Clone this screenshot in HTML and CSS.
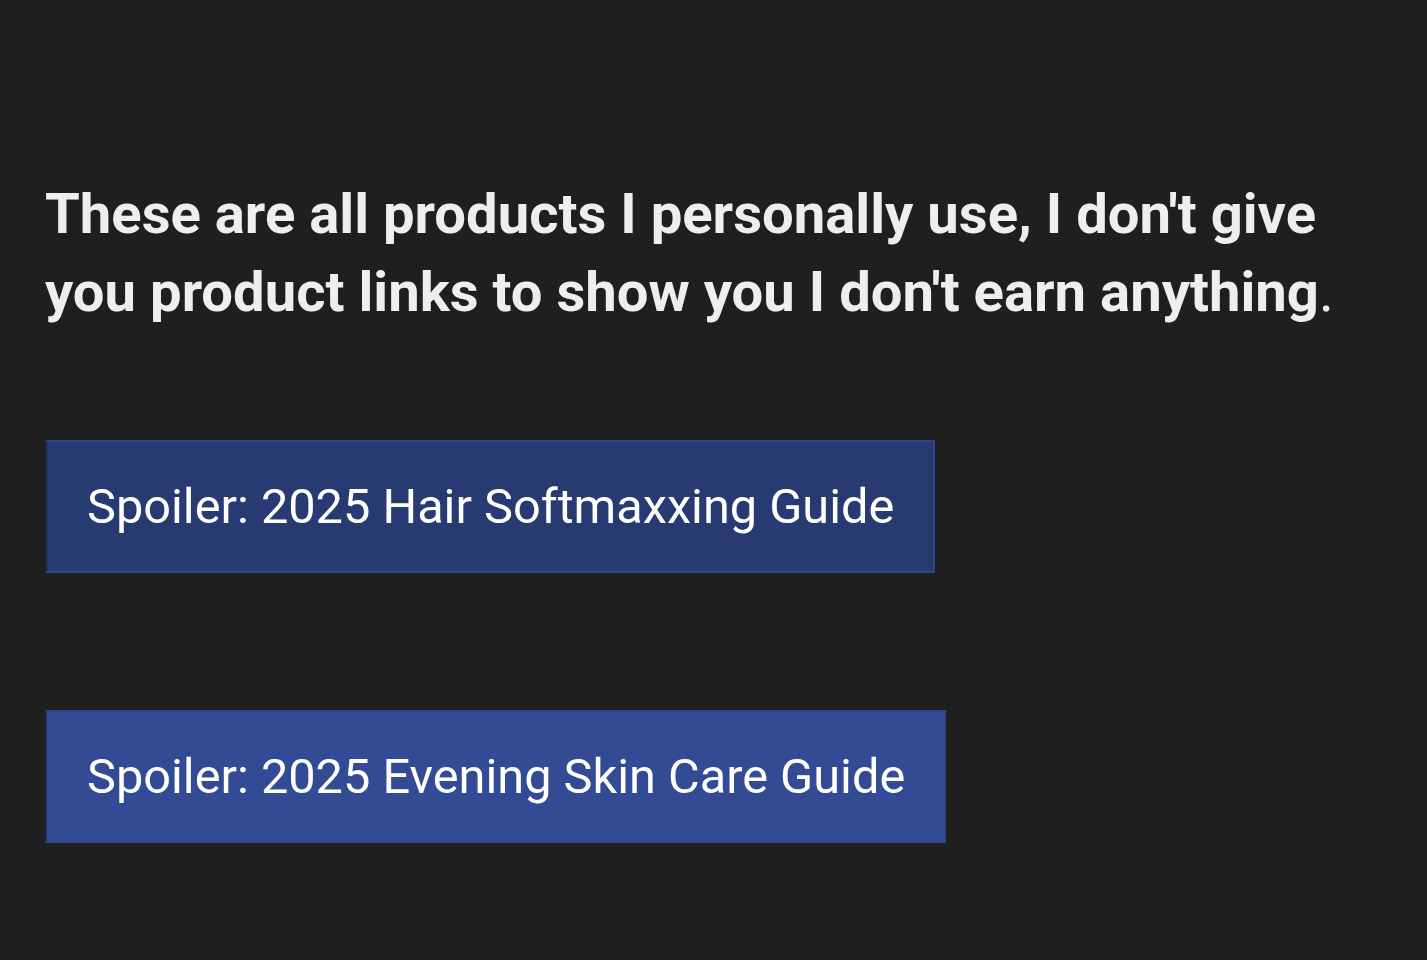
FILE: index.html
```html
<!DOCTYPE html>
<html lang="en">
<head>
    <meta charset="UTF-8">
    <meta name="viewport" content="width=device-width, initial-scale=1.0">
    <title>Products</title>
    <link rel="stylesheet" href="styles.css">
</head>
<body>
    <div class="page">
        <p class="intro"><strong>These are all products I personally use, I don't give you product links to show you I don't earn anything</strong>.</p>

        <!-- Spoiler buttons -->
        <div class="spoilers">
            <button class="spoiler">Spoiler: 2025 Hair Softmaxxing Guide</button>
            <button class="spoiler active">Spoiler: 2025 Evening Skin Care Guide</button>
        </div>
    </div>
</body>
</html>
```

FILE: styles.css
```css
body {
    background-color: #1f1f1f;
    color: #eeeeee;
    font-family: Roboto, "Noto Sans", Arial, sans-serif;
    margin: 0;
    padding: 0;
}
.page {
    padding: 175px 46px 0 45px;
}
.intro {
    font-size: 56.2px;
    line-height: 78px;
    margin: 0;
    max-width: 1330px;
}
.intro strong {
    font-weight: 700;
}
.spoilers {
    display: flex;
    flex-direction: column;
    align-items: flex-start;
    gap: 137px;
    margin-top: 109px;
}
.spoiler {
    background-color: #273a72;
    color: #ffffff;
    font-family: Roboto, "Noto Sans", Arial, sans-serif;
    font-size: 48.7px;
    height: 133px;
    padding: 0 39px 0 40px;
    border: 2px solid #2d4486;
    border-left-color: #1a2548;
    cursor: pointer;
}
.spoiler.active {
    background-color: #324b94;
    border-color: #2e4586;
    border-left-color: #1f2c56;
}
```
